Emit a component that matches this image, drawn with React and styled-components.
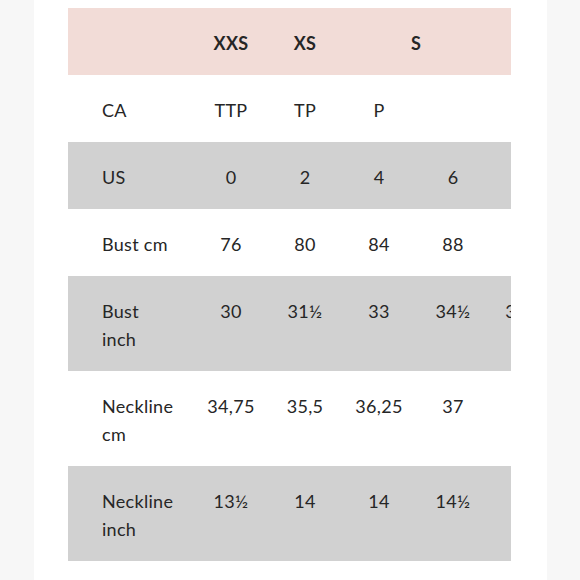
import React from 'react';
import styled, { createGlobalStyle } from 'styled-components';

const GlobalStyle = createGlobalStyle`
  body {
    margin: 0;
    background: #f7f7f7;
    font-family: Lato, "Open Sans", sans-serif;
    color: #262626;
  }
`;

const Page = styled.div`
  display: flex;
  padding-left: 34px;
`;

const Card = styled.div`
  width: 513px;
  min-height: 580px;
  box-sizing: border-box;
  background: #fff;
  padding: 8px 0 0 34px;
`;

const TableWrap = styled.div`
  width: 443px;
  overflow: hidden;
`;

const Table = styled.table`
  border-collapse: collapse;
  table-layout: fixed;
  width: 474px;
`;

const Row = styled.tr`
  background: ${(p) => (p.$tone === 'pink' ? '#f2dcd7' : p.$tone === 'grey' ? '#d1d1d1' : '#fff')};
`;

const Cell = styled.td`
  padding: 21px 0 18px;
  line-height: 28px;
  font-size: 18px;
  letter-spacing: 0.3px;
  vertical-align: top;
  text-align: center;
  white-space: nowrap;
  font-weight: ${(p) => (p.$head ? 700 : 400)};
`;

const LabelCell = styled(Cell)`
  text-align: left;
  padding-left: 34px;
  padding-right: 18px;
  white-space: normal;
`;

const rows = [
  { label: 'CA', values: ['TTP', 'TP', 'P', '', ''] },
  { label: 'US', values: ['0', '2', '4', '6', ''], tone: 'grey' },
  { label: 'Bust cm', values: ['76', '80', '84', '88', ''] },
  { label: 'Bust inch', values: ['30', '31½', '33', '34½', '36'], tone: 'grey' },
  { label: 'Neckline cm', values: ['34,75', '35,5', '36,25', '37', ''] },
  { label: 'Neckline inch', values: ['13½', '14', '14', '14½', ''], tone: 'grey' },
];

export default function App() {
  return (
    <>
      <GlobalStyle />
      <Page>
        <Card>
          <TableWrap>
            <Table>
              <colgroup>
                <col style={{ width: 126 }} />
                <col style={{ width: 74 }} />
                <col style={{ width: 74 }} />
                <col style={{ width: 74 }} />
                <col style={{ width: 74 }} />
                <col style={{ width: 52 }} />
              </colgroup>
              <tbody>
                <Row $tone="pink">
                  <LabelCell />
                  <Cell $head>XXS</Cell>
                  <Cell $head>XS</Cell>
                  <Cell $head colSpan={2}>S</Cell>
                  <Cell $head />
                </Row>
                {rows.map((r) => (
                  <Row key={r.label} $tone={r.tone}>
                    <LabelCell>{r.label}</LabelCell>
                    {r.values.map((v, i) => (
                      <Cell key={i}>{v}</Cell>
                    ))}
                  </Row>
                ))}
              </tbody>
            </Table>
          </TableWrap>
        </Card>
      </Page>
    </>
  );
}
